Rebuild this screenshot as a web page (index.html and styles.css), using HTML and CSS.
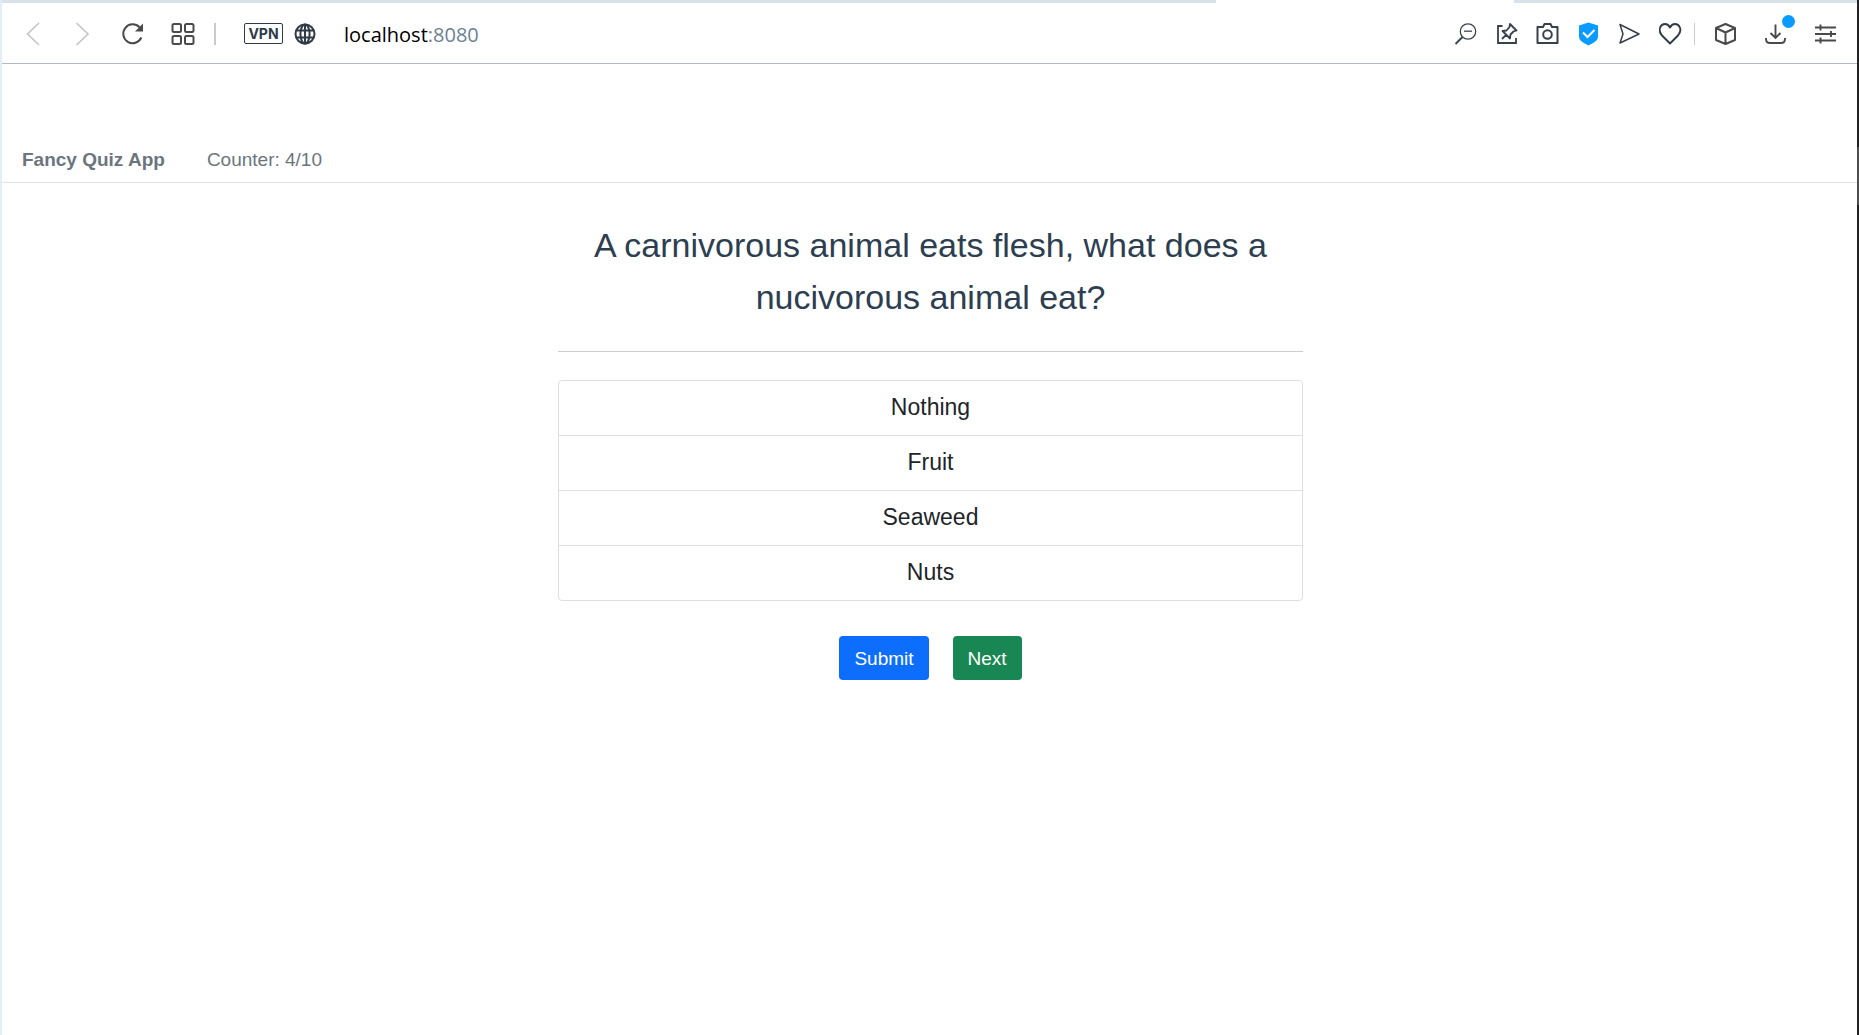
FILE: index.html
```html
<!DOCTYPE html>
<html lang="en">
<head>
<meta charset="utf-8">
<title>Fancy Quiz App</title>
<link rel="stylesheet" href="styles.css">
</head>
<body>
<div class="window">
  <div class="tab-strip"><div class="active-tab"></div></div>

  <div class="toolbar">
    <button class="tool" aria-label="Back" disabled><svg width="24" height="24" viewBox="0 0 24 24"><path d="M18 1 6.500 12 18 23" stroke="#c4c4c4" stroke-width="1.600"/></svg></button>
    <button class="tool" aria-label="Forward" disabled><svg width="24" height="24" viewBox="0 0 24 24"><path d="M5.500 1 17 12 5.500 23" stroke="#c4c4c4" stroke-width="1.600"/></svg></button>
    <button class="tool" aria-label="Reload"><svg width="24" height="24" viewBox="0 0 24 24" stroke="#4a4a4a"><path d="M20.300 15.500A9.400 9.400 0 1 1 18.500 5.300" stroke-width="2"/><path d="M22 1.500V9.500H14Z" fill="#4a4a4a" stroke="none"/></svg></button>
    <button class="tool" aria-label="Speed dial"><svg width="24" height="24" viewBox="0 0 24 24" stroke="#4a4a4a" stroke-width="2"><rect x="1.500" y="2" width="8.500" height="8" rx="1.500"/><rect x="14" y="2" width="8.500" height="8" rx="1.500"/><rect x="1.500" y="14" width="8.500" height="8" rx="1.500"/><rect x="14" y="14" width="8.500" height="8" rx="1.500"/></svg></button>
    <span class="divider divider-left"></span>
    <button class="vpn">VPN</button>
    <button class="site-info" aria-label="Site information"><svg width="22" height="22" viewBox="0 0 22 22" stroke="#2f3b46" stroke-width="2"><circle cx="11" cy="11" r="9.500"/><ellipse cx="11" cy="11" rx="4.600" ry="9.500"/><path d="M11 1.500v19M2.500 7.500h17M2.500 14.500h17"/></svg></button>
    <a class="address" href="#"><span class="host">localhost</span>:8080</a>

    <button class="tool tool-narrow" aria-label="Zoom out"><svg width="24" height="24" viewBox="0 0 24 24" stroke="#3b4652" stroke-width="1.300"><circle cx="14" cy="9.500" r="7.700"/><path d="M10 9.200h8"/><path d="M8.500 15 1.500 22" stroke-width="2"/></svg></button>
    <button class="tool tool-narrow" aria-label="Edit pins"><svg width="24" height="24" viewBox="0 0 24 24" stroke="#36414c" stroke-width="1.800"><path d="M7.500 4H3v17h18v-5"/><path d="M15 2 21.500 8.500 18.500 9.500 15.500 12.500 15 16.500 7.500 9 11.500 8.500 14.500 5ZM11.300 12.700 7 17" stroke-linejoin="round"/></svg></button>
    <button class="tool tool-narrow" aria-label="Snapshot"><svg width="24" height="24" viewBox="0 0 24 24" stroke="#36414c" stroke-width="2"><path d="M1.500 5H7l1.500-3h6L16 5h5.500v16h-20Z" stroke-linejoin="round"/><circle cx="11.500" cy="12.500" r="4.300"/></svg></button>
    <button class="tool tool-narrow" aria-label="Ad blocker"><svg width="24" height="24" viewBox="0 0 24 24"><path d="M11.500 .5 21 3.500V14.500C21 19 16 21 11.500 23.500 7 21 2 19 2 14.500V3.500Z" fill="#0a9bff"/><path d="M6 10.500 10.500 15l7-7" stroke="#fff" stroke-width="2"/></svg></button>
    <button class="tool tool-narrow" aria-label="Send to My Flow"><svg width="24" height="24" viewBox="0 0 24 24" stroke="#36414c" stroke-width="1.500"><path d="M2 2.500 21 12 2 21 5 12Z" stroke-linejoin="round"/></svg></button>
    <button class="tool tool-narrow" aria-label="Bookmark"><svg width="24" height="24" viewBox="0 0 24 24" stroke="#2f3b46" stroke-width="1.900"><path d="M11 21.500 3 13.500C-2 7.500 2 2 6 2c2.500 0 4 1.500 5 3.500C12 3.500 13.500 2 16 2c4 0 8 5.500 3 11.500Z" stroke-linejoin="round"/></svg></button>
    <span class="divider divider-right"></span>
    <button class="tool" aria-label="Extensions"><svg width="24" height="24" viewBox="0 0 24 24" stroke="#4a4a4a" stroke-width="2" stroke-linejoin="round"><path d="M11.500 2 21 6V18L11.500 22 2 18V6ZM2 6 11.500 10.500 21 6M11.500 10.500V22"/></svg></button>
    <button class="tool tool-downloads" aria-label="Downloads"><svg width="24" height="24" viewBox="0 0 24 24" stroke="#4a4a4a" stroke-width="1.900"><path d="M11.500 2.500v13M6.500 11l5 5 5-5"/><path d="M2 16v1q0 4 4 4h11q4 0 4-4v-1"/></svg><span class="dot"></span></button>
    <button class="tool" aria-label="Easy setup"><svg width="24" height="24" viewBox="0 0 24 24" stroke="#4a4a4a" stroke-width="1.900"><path d="M1 5.500h21M1 12h21M1 18.500h21M6.500 2.500v6M17 9v6M6.500 15.500v6"/></svg></button>
  </div>

  <header class="quiz-header">
    <strong>Fancy Quiz App</strong>
    <span>Counter: 4/10</span>
  </header>

  <main class="quiz">
    <h1 class="question">A carnivorous animal eats flesh, what does a nucivorous animal eat?</h1>
    <hr class="rule">
    <ul class="answers">
      <li><button class="answer">Nothing</button></li>
      <li><button class="answer">Fruit</button></li>
      <li><button class="answer">Seaweed</button></li>
      <li><button class="answer">Nuts</button></li>
    </ul>
    <div class="actions">
      <button class="action action-submit">Submit</button>
      <button class="action action-next">Next</button>
    </div>
  </main>
</div>
<div class="scroll-edge"><div class="scroll-thumb"></div></div>
</body>
</html>
```
FILE: styles.css
```css
* { box-sizing: border-box; }

body {
  margin: 0;
  background: #fff;
  color: #212529;
  font-family: "Liberation Sans", Arial, sans-serif;
  font-size: 19px;
}

button {
  margin: 0;
  padding: 0;
  border: 0;
  background: none;
  color: inherit;
  font: inherit;
}

.window {
  min-height: 100vh;
  border-left: 2px solid #e3edf7;
}

/* Browser chrome */
.tab-strip {
  height: 3px;
  background: #d9e1ea;
}

.active-tab {
  width: 16%;
  height: 100%;
  margin-left: 65.4%;
  background: #fff;
}

.toolbar {
  display: flex;
  align-items: center;
  height: 61px;
  padding: 1px 8px 0 6px;
  border-bottom: 1px solid #b0bbc9;
}

.tool {
  display: flex;
  justify-content: center;
  flex: none;
  width: 50px;
}

.tool-narrow { width: 41px; }

.tool svg,
.site-info svg {
  display: block;
  fill: none;
}

.divider {
  flex: none;
  height: 22px;
  background: #cacaca;
}

.divider-left {
  width: 2px;
  margin: 0 28px 0 6px;
}

.divider-right {
  width: 1px;
  margin: 0 6px 0 3px;
}

.vpn {
  width: 39px;
  height: 21px;
  border: 1px solid #2f3b46;
  border-radius: 2px;
  color: #2f3b46;
  font-family: Inter, sans-serif;
  font-size: 14px;
  font-weight: 700;
  line-height: 19px;
}

.site-info {
  width: 22px;
  margin: 0 28px 0 11px;
}

.address {
  flex: 1;
  padding-top: 3px;
  color: #6d7f92;
  font-family: "Open Sans", sans-serif;
  font-size: 20px;
  line-height: 28px;
  text-decoration: none;
}

.host { color: #000; }

.tool-downloads { position: relative; }

.dot {
  position: absolute;
  top: -7px;
  right: 6px;
  width: 13px;
  height: 13px;
  border-radius: 50%;
  background: #0a9bff;
}

/* Quiz page */
.quiz-header {
  display: flex;
  gap: 42px;
  padding: 82px 20px 8px;
  border-bottom: 1px solid #dee2e6;
  color: #6c757d;
  line-height: 28px;
}

.quiz {
  max-width: 745px;
  margin: 0 auto;
  padding-top: 36px;
  text-align: center;
}

.question {
  margin: 0;
  color: #2c3e50;
  font-size: 34px;
  font-weight: 400;
  line-height: 52px;
}

.rule {
  height: 1px;
  margin: 28px 0;
  border: 0;
  background: #cacdd1;
}

.answers {
  margin: 0;
  padding: 0;
  border: 1px solid #dfdfdf;
  border-radius: 4px;
  list-style: none;
}

.answers li + li { border-top: 1px solid #dfdfdf; }

.answer {
  display: block;
  width: 100%;
  height: 54px;
  padding-bottom: 1px;
  font-size: 23px;
  line-height: 53px;
}

.actions {
  display: flex;
  justify-content: center;
  gap: 24px;
  margin-top: 35px;
}

.action {
  height: 44px;
  padding: 1px 15px 0;
  border-radius: 4px;
  color: #fff;
}

.action-submit { background: #0d6efd; }
.action-next { background: #198754; }

/* Scrollbar sliver along the window's right edge */
.scroll-edge {
  position: fixed;
  top: 0;
  right: 0;
  bottom: 0;
  width: 2px;
  padding-top: 147px;
  background: #222;
}

.scroll-thumb {
  height: 58px;
  background: #4d4d4d;
}
```
